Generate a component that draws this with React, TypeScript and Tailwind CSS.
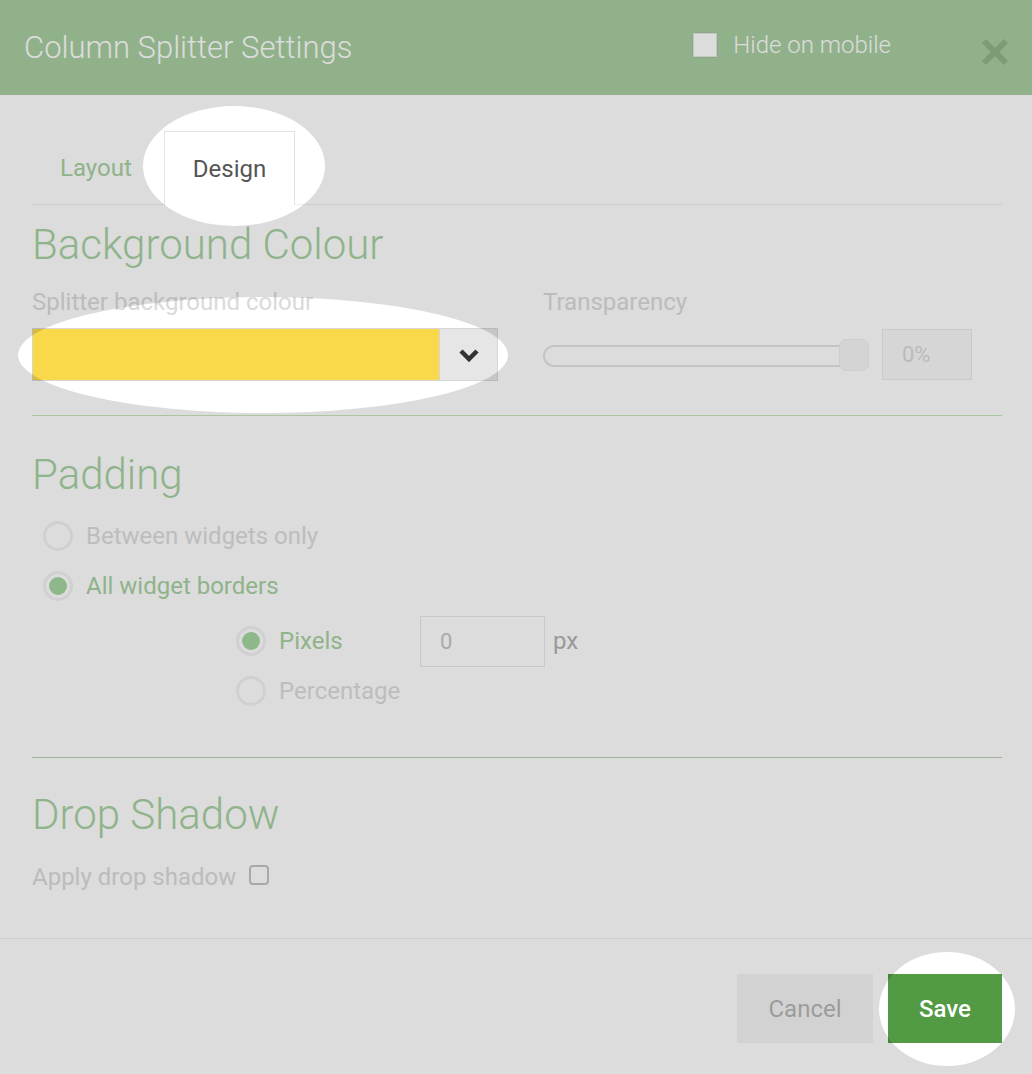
import React from 'react';

const font = { fontFamily: 'Roboto, "Open Sans", sans-serif' };

function Radio({ checked, label, green }: { checked?: boolean; label: string; green?: boolean }) {
  return (
    <div className="flex items-center h-[50px]">
      <span className="w-[30px] h-[30px] rounded-full border-[3px] border-[#f1f1f1] bg-white flex items-center justify-center">
        {checked && <span className="w-[18px] h-[18px] rounded-full bg-[#a6d6a0]" />}
      </span>
      <span className={`ml-[13px] text-[24px] ${green ? 'text-[#a6d0a0]' : 'text-[#dcdcdc]'}`}>{label}</span>
    </div>
  );
}

export default function App() {
  return (
    <div style={font} className="relative w-[1032px] h-[1074px] overflow-hidden bg-white flex flex-col">
      {/* header */}
      <div className="h-[95px] shrink-0 bg-[#a8cea2] flex items-center pl-6 pr-[22px]">
        <h1 className="flex-1 text-[31px] leading-[36px] font-light text-white">Column Splitter Settings</h1>
        <label className="flex items-center mb-[5px]">
          <span className="w-[24px] h-[24px] bg-white border border-[#e6e6e6] shadow-[0_0_2px_rgba(0,0,0,0.15)]" />
          <span className="ml-4 text-[24px] font-light text-white">Hide on mobile</span>
        </label>
        <button className="ml-[89px] mt-[9px] w-[30px] h-[30px] flex items-center justify-center">
          <svg width="30" height="30" viewBox="0 0 30 30">
            <path d="M4 4L26 26M26 4L4 26" stroke="#91b48b" strokeWidth="6" />
          </svg>
        </button>
      </div>

      {/* body */}
      <div className="flex-1 pt-[36px] pl-[32px] pr-[30px]">
        <div className="flex h-[74px] border-b border-[#eeeeee]">
          <div className="pl-[28px] pr-[32px] flex items-center text-[24px] text-[#a6d0a0]">Layout</div>
          <div className="px-[28px] flex items-center text-[24px] text-[#555555] bg-white border border-b-0 border-[#e2e2e2] -mb-px h-[74px]">
            Design
          </div>
        </div>

        <h2 className="mt-[16px] text-[42px] leading-[48px] font-light text-[#a6d0a0]">Background Colour</h2>
        <div className="flex">
          <div className="w-[466px]">
            <div className="mt-[19px] mb-[12px] text-[24px] leading-[28px] text-[#dadada]">Splitter background colour</div>
            <div className="flex h-[53px] border border-[#d6d6d6]">
              <div className="flex-1 bg-[#f9d949]" />
              <div className="w-[58px] bg-[#e6e6e6] border-l border-[#d6d6d6] flex items-center justify-center">
                <svg width="22" height="14" viewBox="0 0 22 14">
                  <path d="M3 3L11 11L19 3" stroke="#333333" strokeWidth="4.5" fill="none" />
                </svg>
              </div>
            </div>
          </div>
          <div className="ml-[45px]">
            <div className="mt-[19px] mb-[12px] text-[24px] leading-[28px] text-[#dadada]">Transparency</div>
            <div className="flex items-center h-[53px]">
              <div className="relative w-[326px] h-[32px]">
                <div className="absolute left-0 top-[6px] w-[312px] h-[22px] rounded-full border-2 border-[#e4e4e4] bg-white" />
                <div className="absolute right-0 top-0 w-[30px] h-[32px] rounded-[7px] border border-[#eeeeee] bg-[#f6f6f6]" />
              </div>
              <div className="ml-[13px] w-[90px] h-[51px] bg-[#f8f8f8] border border-[#eaeaea] flex items-center pl-[19px] text-[22px] text-[#d9d9d9]">
                0%
              </div>
            </div>
          </div>
        </div>

        <div className="mt-[34px] border-t border-[#c3e6bb]" />

        <h2 className="mt-[35px] text-[42px] leading-[48px] font-light text-[#a6d0a0]">Padding</h2>
        <div className="mt-[12px] pl-[11px]">
          <Radio label="Between widgets only" />
          <Radio checked green label="All widget borders" />
          <div className="pl-[193px] mt-[5px]">
            <div className="flex items-center h-[50px]">
              <div className="w-[184px]">
                <Radio checked green label="Pixels" />
              </div>
              <div className="w-[125px] h-[51px] border border-[#e8e8e8] flex items-center pl-[19px] text-[22px] text-[#c6c6c6]">0</div>
              <span className="ml-[8px] text-[24px] text-[#b2b2b2]">px</span>
            </div>
            <Radio label="Percentage" />
          </div>
        </div>

        <div className="mt-[41px] border-t border-[#b6cfb1]" />

        <h2 className="mt-[33px] text-[42px] leading-[48px] font-light text-[#a6d0a0]">Drop Shadow</h2>
        <div className="mt-[18px] flex items-center h-[40px]">
          <span className="text-[24px] text-[#dadada]">Apply drop shadow</span>
          <span className="ml-[13px] w-[20px] h-[20px] rounded-[4px] border-2 border-[#c4c4c4] -mt-[4px]" />
        </div>
      </div>

      {/* footer */}
      <div className="h-[136px] shrink-0 border-t border-[#f2f2f2] flex justify-end items-start pt-[35px] pr-[30px]">
        <button className="w-[136px] h-[69px] bg-[#f4f4f4] text-[24px] text-[#b5b5b5]">Cancel</button>
        <button className="ml-[15px] w-[114px] h-[69px] bg-[#529a44] text-[24px] font-medium text-white">Save</button>
      </div>

      {/* spotlight overlay */}
      <svg className="absolute inset-0 pointer-events-none" width="1032" height="1074" viewBox="0 0 1032 1074">
        <defs>
          <mask id="holes">
            <rect width="1032" height="1074" fill="white" />
            <ellipse cx="234" cy="166" rx="91" ry="60" fill="black" />
            <ellipse cx="263" cy="355" rx="245" ry="58" fill="black" />
            <ellipse cx="947" cy="1009" rx="68" ry="57" fill="black" />
          </mask>
        </defs>
        <rect width="1032" height="1074" fill="black" fillOpacity="0.137" mask="url(#holes)" />
      </svg>
    </div>
  );
}
